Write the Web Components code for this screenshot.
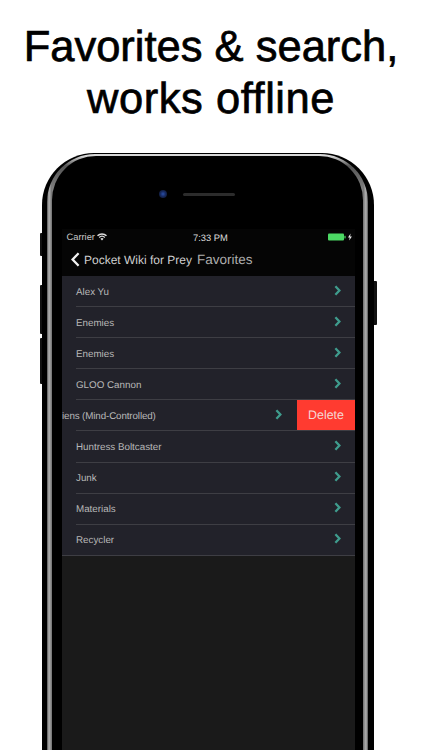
<!DOCTYPE html>
<html><head><meta charset="utf-8"><title>Favorites</title>
<style>
html,body{margin:0;padding:0;height:750px;overflow:hidden;background:#fff;font-family:"Liberation Sans",Arial,sans-serif;text-rendering:geometricPrecision}
body{display:flex;flex-direction:column}
</style></head><body>
<promo-headline>Favorites &amp; search,<br><span style="letter-spacing:.55px">works offline</span></promo-headline>
<phone-frame>
  <status-bar carrier="Carrier" time="7:33 PM"></status-bar>
  <nav-bar back="Pocket Wiki for Prey" title="Favorites"></nav-bar>
  <fav-list>
    <fav-row>Alex Yu</fav-row>
    <fav-row>Enemies</fav-row>
    <fav-row>Enemies</fav-row>
    <fav-row>GLOO Cannon</fav-row>
    <fav-row swiped>iens (Mind-Controlled)</fav-row>
    <fav-row>Huntress Boltcaster</fav-row>
    <fav-row>Junk</fav-row>
    <fav-row>Materials</fav-row>
    <fav-row last>Recycler</fav-row>
  </fav-list>
</phone-frame>
<script>
function def(name, html, init){
  customElements.define(name, class extends HTMLElement{
    constructor(){super();this.attachShadow({mode:'open'}).innerHTML=html;}
    connectedCallback(){ if(init) init(this,this.shadowRoot); }
  });
}
def('promo-headline',`<style>
:host{display:block;flex:none;height:153px;box-sizing:border-box;padding-top:21px;text-align:center;color:#000;
font:500 43.5px/52px "Liberation Sans",Arial,sans-serif;white-space:nowrap;-webkit-text-stroke:.7px #000}
</style><slot></slot>`);

def('phone-frame',`<style>
:host{display:block;flex:1;min-height:0;position:relative;width:332px;margin-left:42px;box-sizing:border-box;
background:#000;border-radius:52px 52px 0 0;padding:1px 6px 0 5px}
.rim{height:100%;box-sizing:border-box;padding:1.5px 5px 0;border-radius:48px 48px 0 0;
background:linear-gradient(90deg,#555 0,#b4b4b4 2px,#6e6e6e 5px,transparent 5px,transparent calc(100% - 5px),#6e6e6e calc(100% - 5px),#b4b4b4 calc(100% - 2px),#555 100%),linear-gradient(180deg,#d8d8d8 0,#d8d8d8 2px,#555 12px,#888 40px);}
.glass{height:100%;box-sizing:border-box;background:#000;border-radius:44px 44px 0 0;padding:0 8px 0 10px;display:flex;flex-direction:column}
.ear{flex:none;height:73px;display:flex;align-items:center;justify-content:center;gap:16px;padding:4px 23px 0 0;box-sizing:border-box}
.cam{width:8px;height:8px;border-radius:50%;background:radial-gradient(circle at 50% 50%,#2a4fa8 0,#172a60 45%,#0b0f1c 100%)}
.spk{width:52px;height:3px;border-radius:2px;background:#2c2c2c}
.screen{flex:1;min-height:0;background:#000;display:flex;flex-direction:column;overflow:hidden}
.btn{position:absolute;background:#111}
.l{left:-2px;width:2px;border-radius:1px 0 0 1px}
.r{right:-3px;width:3px;top:128px;height:44px;border-radius:0 1px 1px 0}
</style>
<i class="btn l" style="top:80px;height:23px"></i>
<i class="btn l" style="top:132px;height:49px"></i>
<i class="btn l" style="top:185px;height:46px"></i>
<i class="btn r"></i>
<div class="rim"><div class="glass">
<div class="ear"><i class="cam"></i><i class="spk"></i></div>
<div class="screen"><slot></slot></div>
</div></div>`);

def('status-bar',`<style>
:host{display:flex;flex:none;align-items:center;height:18px;padding:0 1px 1px 4.5px;box-sizing:border-box;position:relative;color:#c8c8c8;font:9.3px/17px "Liberation Sans",Arial,sans-serif;background:#050505}
.left{display:flex;align-items:center;gap:2px;width:126.5px}
.time{flex:none;width:34px;text-align:center;white-space:nowrap;color:#dedede;font-size:9.4px}
.right{margin-left:auto;display:flex;align-items:center}
</style>
<div class="left"><span id="c"></span>
<svg width="10" height="8" viewBox="0 0 10 8"><path d="M5 7.6 3.4 5.8a2.3 2.3 0 0 1 3.2 0zM2.6 5 1.7 4a4.8 4.8 0 0 1 6.6 0l-.9 1a3.5 3.5 0 0 0-4.8 0zM1 3.3 0 2.2a7.3 7.3 0 0 1 10 0L9 3.3a6 6 0 0 0-8 0z" fill="#ddd"/></svg></div>
<span class="time" id="t"></span>
<div class="right">
<svg width="26" height="8" viewBox="0 0 26 8"><rect x="0" y="0.5" width="16" height="7" rx="1" fill="#4cd964"/><rect x="16.4" y="2.8" width="1.2" height="2.6" fill="#4cd964"/>
<path d="M22.6 0.4 20 4.5h1.7l-.5 3.1 2.7-4.2h-1.8z" fill="#eee"/></svg></div>`,
(h,s)=>{s.getElementById('c').textContent=h.getAttribute('carrier');s.getElementById('t').textContent=h.getAttribute('time');});

def('nav-bar',`<style>
:host{display:flex;flex:none;align-items:center;height:29.5px;padding:0 0 3px 9px;box-sizing:border-box;color:#cfcfcf;background:#050505;font:12px/16px "Liberation Sans",Arial,sans-serif;white-space:nowrap}
svg{flex:none;margin-right:4px}
.title{margin-left:5px;font-size:13.5px;color:#adadad}
</style>
<svg width="9" height="15" viewBox="0 0 9 15"><path d="M7.6 1.2 1.6 7.5l6 6.3" fill="none" stroke="#f2f2f2" stroke-width="2.3"/></svg>
<span id="b"></span><span class="title" id="t"></span>`,
(h,s)=>{s.getElementById('b').textContent=h.getAttribute('back');s.getElementById('t').textContent=h.getAttribute('title');});

def('fav-list',`<style>
:host{display:block;flex:1;min-height:0;background:#1a1a1a;font:9.8px/14px "Liberation Sans",Arial,sans-serif;color:#b8b8b8}
</style><slot></slot>`);

def('fav-row',`<style>
:host{display:block;height:31.1px;background:#22222a;position:relative;overflow:hidden}
.in{height:100%;box-sizing:border-box;margin-left:14px;padding-right:14px;display:flex;align-items:center;justify-content:space-between;border-bottom:1px solid #3e3e44;white-space:nowrap}
svg{flex:none;margin-bottom:2px}
.txt{margin-top:3px}
:host([last]) .in{margin-left:0;padding-left:14px}
:host([swiped]) .in{margin-left:0;padding-right:0;border-bottom:0}
.main{display:contents}
:host([swiped]) .main{display:flex;flex:1;align-items:center;justify-content:space-between;padding-right:15px}
:host([swiped]) .txt{letter-spacing:-.12px}
.del{display:none}
:host([swiped]){background:linear-gradient(#3e3e44,#3e3e44) left 14px bottom 0/calc(100% - 14px) 1px no-repeat,#22222a}
:host([swiped]) .del{display:flex;flex:none;width:58px;height:calc(100% - 1px);margin-top:-1px;align-items:center;justify-content:center;background:#ff3b30;color:#f6d6d3;font-size:12.4px}
</style>
<div class="in"><div class="main"><span class="txt"><slot></slot></span>
<svg width="7" height="11" viewBox="0 0 7 11"><path d="M1.4 1.2 5.4 5.5l-4 4.3" fill="none" stroke="#3f9c8d" stroke-width="2.3"/></svg></div>
<div class="del">Delete</div></div>`);
</script>
</body></html>
